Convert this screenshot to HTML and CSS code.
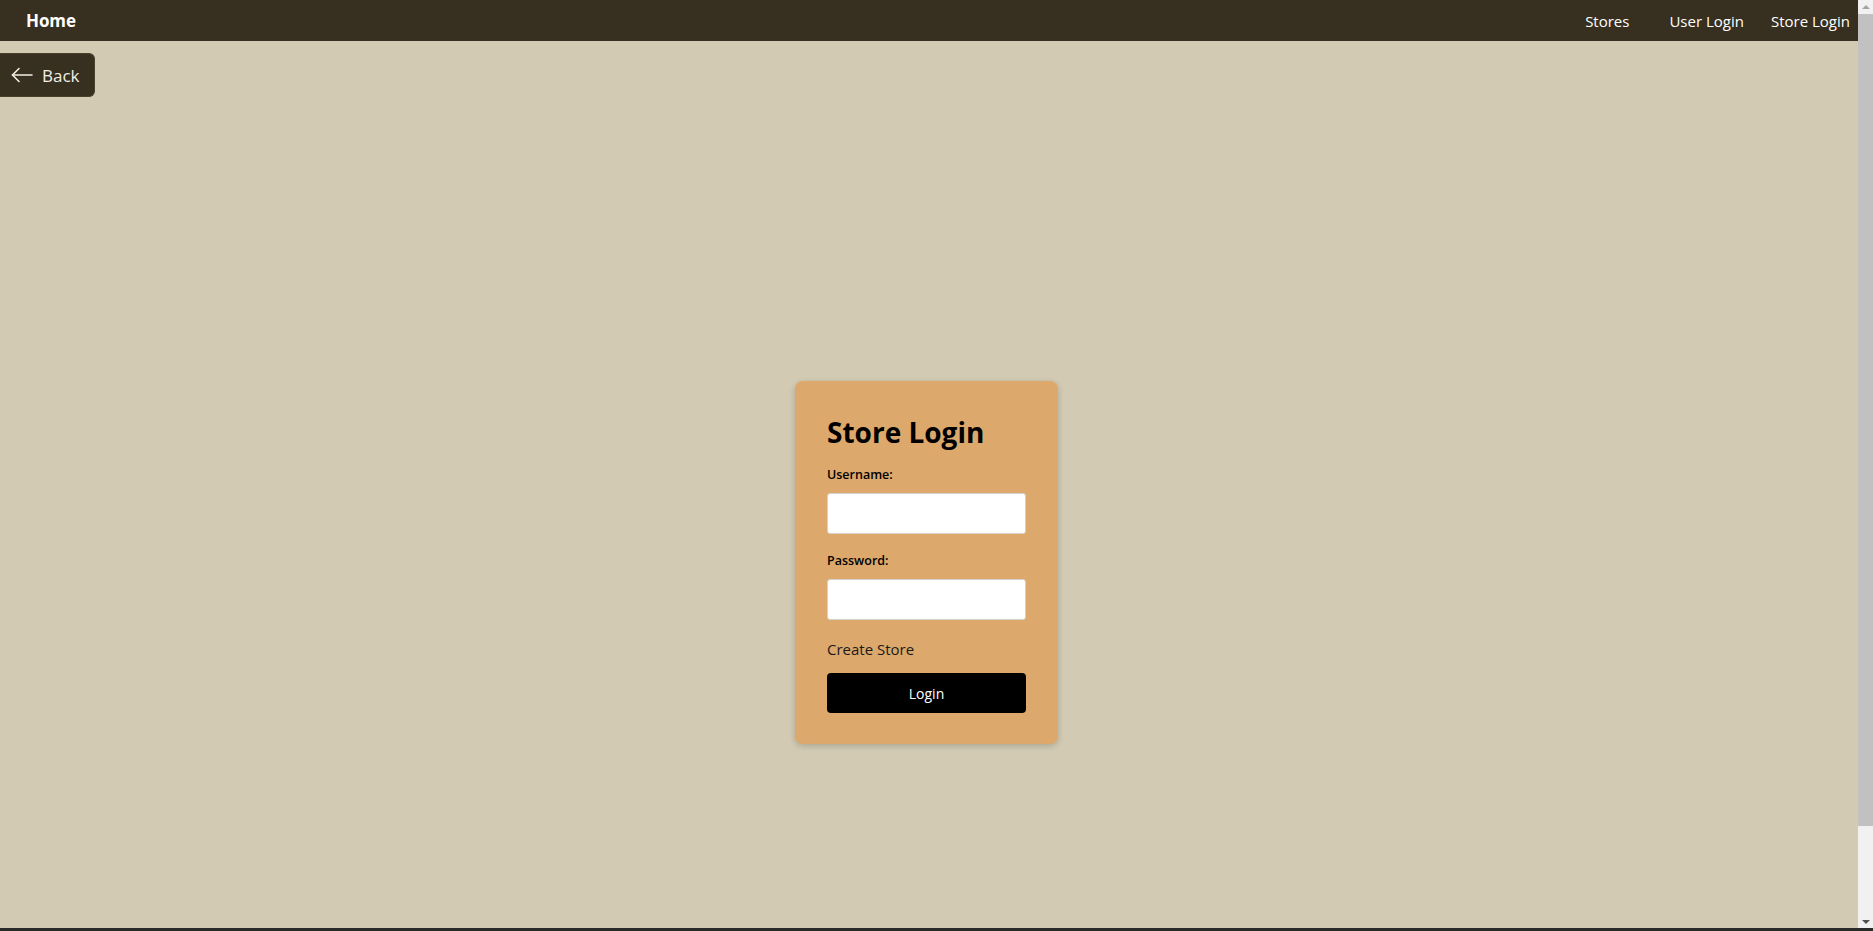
FILE: index.html
```html
<!DOCTYPE html>
<html lang="en">
<head>
<meta charset="utf-8">
<title>Store Login</title>
<link rel="stylesheet" href="styles.css">
</head>
<body>
<div class="frame">
  <div class="window">
    <div class="page">
      <nav class="navbar">
        <a class="brand" href="#">Home</a>
        <div class="links">
          <a class="link link-stores" href="#">Stores</a>
          <a class="link link-user" href="#">User Login</a>
          <a class="link" href="#">Store Login</a>
        </div>
      </nav>
      <button class="back" type="button">
        <svg class="back-icon" width="22" height="16" viewBox="0 0 22 16" fill="none" stroke="currentColor" stroke-width="1.6" stroke-linecap="round" stroke-linejoin="round">
          <path d="M21 8H1.5"/>
          <path d="M8 1.5L1.5 8L8 14.5"/>
        </svg>
        <span>Back</span>
      </button>
      <main class="center">
        <form class="card">
          <h2 class="title">Store Login</h2>
          <label class="label" for="u">Username:</label>
          <input class="input" id="u" type="text">
          <label class="label label-second" for="p">Password:</label>
          <input class="input" id="p" type="password">
          <a class="create" href="#">Create Store</a>
          <button class="submit" type="button">Login</button>
        </form>
      </main>
    </div>
    <div class="scrollbar">
      <div class="sb-btn sb-up"><span class="tri tri-up"></span></div>
      <div class="sb-track">
        <div class="sb-thumb"></div>
      </div>
      <div class="sb-btn sb-down"><span class="tri tri-down"></span></div>
    </div>
  </div>
  <div class="taskbar"></div>
</div>
</body>
</html>
```
FILE: styles.css
```css
html, body {
  margin: 0;
  padding: 0;
  height: 100%;
  overflow: hidden;
}
body {
  font-family: "Open Sans", "Noto Sans", sans-serif;
  background: #d2cab2;
  color: #000;
}
.frame {
  display: flex;
  flex-direction: column;
  height: 931px;
}
.window {
  display: flex;
  height: 928px;
}
.page {
  flex: 1;
  overflow: hidden;
  background: #d2cab2;
}
.navbar {
  height: 41px;
  background: #372f20;
  display: flex;
  align-items: center;
  justify-content: space-between;
  padding: 0 8px 0 26px;
}
.brand {
  color: #fff;
  font-weight: 700;
  font-size: 17px;
  text-decoration: none;
  letter-spacing: -0.1px;
}
.links {
  display: flex;
  align-items: center;
}
.link {
  color: #fff;
  text-decoration: none;
  font-size: 15px;
}
.link-stores { margin-right: 40px; }
.link-user { margin-right: 27px; }
.back {
  margin-top: 12px;
  width: 95px;
  height: 44px;
  display: flex;
  align-items: center;
  gap: 9px;
  padding: 0 0 0 11px;
  background: #372f20;
  color: #f2efe6;
  border: 1px solid #4a412c;
  border-left: none;
  border-radius: 0 6px 6px 0;
  font-family: inherit;
  font-size: 17px;
  cursor: pointer;
}
.back-icon { flex: none; }
.center {
  min-height: 931px;
  display: flex;
  align-items: center;
  justify-content: center;
  padding-right: 5px;
}
.card {
  width: 199px;
  padding: 33px 32px 31px;
  background: #dca86b;
  border-radius: 8px;
  box-shadow: 0 2px 6px rgba(0, 0, 0, 0.18);
  display: flex;
  flex-direction: column;
}
.title {
  margin: 0 0 16px;
  font-size: 28px;
  line-height: 36px;
  font-weight: 700;
}
.label {
  font-size: 12.5px;
  line-height: 18px;
  font-weight: 600;
  margin-bottom: 9px;
}
.label-second { margin-top: 18px; }
.input {
  box-sizing: border-box;
  height: 41px;
  width: 100%;
  margin: 0;
  border: 1px solid #d6d2cb;
  border-radius: 3px;
  background: #fff;
}
.create {
  margin-top: 18px;
  font-size: 15px;
  line-height: 22px;
  color: #1a1a1a;
  text-decoration: none;
}
.submit {
  margin-top: 13px;
  height: 40px;
  width: 100%;
  background: #000;
  color: #fff;
  border: none;
  border-radius: 4px;
  font-family: inherit;
  font-size: 14px;
  cursor: pointer;
}
.scrollbar {
  width: 15px;
  display: flex;
  flex-direction: column;
  background: #f1f1f1;
}
.sb-btn {
  height: 13px;
  display: flex;
  align-items: center;
  justify-content: center;
}
.sb-track {
  flex: 1;
  display: flex;
  flex-direction: column;
  padding-top: 1px;
}
.sb-thumb {
  height: 812px;
  background: #c1c1c1;
}
.tri {
  width: 0;
  height: 0;
  border-left: 4px solid transparent;
  border-right: 4px solid transparent;
}
.tri-up { border-bottom: 4px solid #a3a3a3; }
.tri-down { border-top: 4px solid #505050; }
.taskbar {
  height: 3px;
  background: #2a2a2a;
}
```
